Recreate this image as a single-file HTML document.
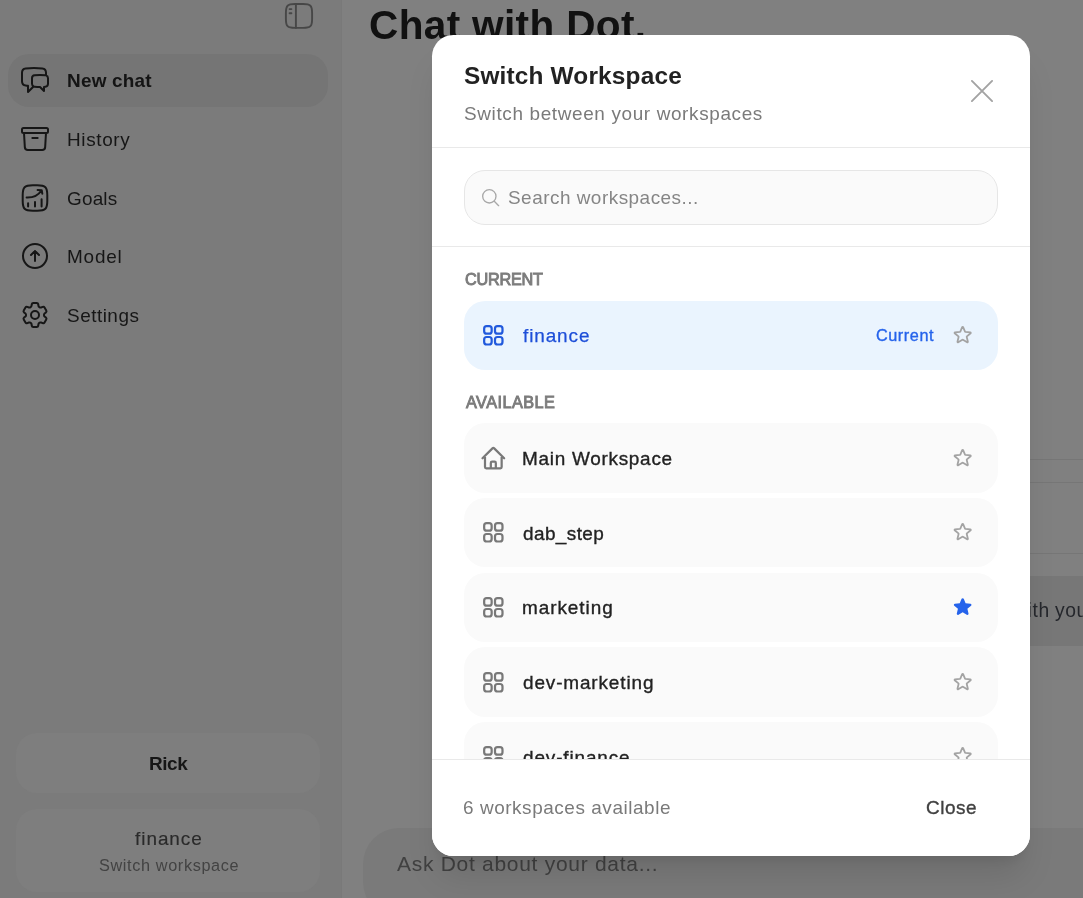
<!DOCTYPE html>
<html lang="en">
<head>
<meta charset="utf-8">
<title>Dot – Switch Workspace</title>
<style>
*{box-sizing:border-box;margin:0;padding:0}
html,body{width:1083px;height:898px;overflow:hidden}
body{position:relative;background:#808080;font-family:"Liberation Sans",sans-serif;color:#171717}
.abs{position:absolute}
.t{position:absolute;white-space:nowrap;line-height:1;font-weight:400;will-change:transform}
svg{position:absolute;display:block;overflow:visible;fill:none;stroke:currentColor;stroke-linecap:round;stroke-linejoin:round}

/* ---------- dimmed app shell (behind overlay) ---------- */
#sidebar{left:0;top:0;width:342px;height:898px;background:#7b7b7b;border-right:1px solid #797979}
.nav-active{left:8px;top:54px;width:320px;height:53px;border-radius:21.33px;background:#757575}
.nav-i{left:19.2px;width:32px;height:32px;color:#161616;stroke-width:1.5}
.side-btn{left:16px;width:304px;border-radius:21px;background:#7e7e7e}
#composer{left:363px;top:828px;width:760px;height:90px;border-radius:36px;background:#7a7a7a}
.hr{left:1030px;width:53px;height:1px;background:#767676}

/* ---------- modal ---------- */
#modal{left:432px;top:35px;width:598px;height:821px;border-radius:21.33px;background:#fff;
 box-shadow:0 26.7px 33.3px -6.7px rgba(0,0,0,.1),0 10.7px 13.3px -8px rgba(0,0,0,.1);overflow:hidden}
.div{left:0;width:598px;height:1px;background:#e9e9e9}
#search{left:32px;top:135px;width:534px;height:55px;border-radius:21px;background:#fafafa;border:1px solid #e6e6e6}
.row{left:32px;width:534px;height:69.33px;border-radius:21.33px;background:#fafafa}
.row.cur{background:#eaf4fe}
.row .ic{left:16px;top:21.33px;width:26.67px;height:26.67px;color:#787878;stroke-width:2}
.row.cur .ic{color:#2159dc}
.row .st{left:488px;top:23.4px;width:21.33px;height:21.33px;color:#a3a3a3;stroke-width:2}
.row .st.on{color:#2563eb;fill:#2563eb;stroke:none}
</style>
</head>
<body>

<!-- ================= SIDEBAR ================= -->
<aside id="sidebar" class="abs">
  <!-- collapse toggle -->
  <svg style="left:284px;top:2px;width:30px;height:28px;color:#474747;stroke-width:1.9" viewBox="284 2 30 28">
    <path d="M294.9 4H303.1C310.5 4 312.1 5.6 312.1 13V18.9C312.1 26.3 310.5 27.9 303.1 27.9H294.9C287.5 27.9 285.9 26.3 285.9 18.9V13C285.9 5.6 287.5 4 294.9 4Z"/>
    <path d="M295.9 4.1V27.9M289.6 9.1H291.4M289.6 13.2H291.4"/>
  </svg>

  <nav>
    <div class="abs nav-active"></div>
    <svg class="nav-i" style="top:64.3px" viewBox="0 0 24 24"><path d="M20.25 8.511c.884.284 1.5 1.128 1.5 2.097v4.286c0 1.136-.847 2.1-1.98 2.193-.34.027-.68.052-1.02.072v3.091l-3-3c-1.354 0-2.694-.055-4.02-.163a2.115 2.115 0 0 1-.825-.242m9.345-8.334a2.126 2.126 0 0 0-.476-.095 48.64 48.64 0 0 0-8.048 0c-1.131.094-1.976 1.057-1.976 2.192v4.286c0 .837.46 1.58 1.155 1.951m9.345-8.334V6.637c0-1.621-1.152-3.026-2.76-3.235A48.455 48.455 0 0 0 11.25 3c-2.115 0-4.198.137-6.24.402-1.608.209-2.76 1.614-2.76 3.235v6.226c0 1.621 1.152 3.026 2.76 3.235.577.075 1.157.14 1.74.194V21l4.155-4.155"/></svg>
    <span id="n1" class="t" style="left:66.84px;top:71.86px;font-size:18.95px;color:#141414;font-weight:700;letter-spacing:0.21px">New chat</span>
    <svg class="nav-i" style="top:123px" viewBox="0 0 24 24"><path d="m20.25 7.5-.625 10.632a2.25 2.25 0 0 1-2.247 2.118H6.622a2.25 2.25 0 0 1-2.247-2.118L3.75 7.5M10 11.25h4M3.375 7.5h17.25c.621 0 1.125-.504 1.125-1.125v-1.5c0-.621-.504-1.125-1.125-1.125H3.375c-.621 0-1.125.504-1.125 1.125v1.5c0 .621.504 1.125 1.125 1.125Z"/></svg>
    <span id="n2" class="t" style="left:66.80px;top:130.96px;font-size:18.95px;color:#161616;letter-spacing:0.629px">History</span>
    <!-- goals: squircle chart -->
    <svg style="left:19px;top:181.7px;width:32px;height:32px;color:#161616;stroke-width:2" viewBox="19 181.7 32 32">
      <path d="M32.7 185H37.3C45.5 185 47.3 186.8 47.3 195V200.4C47.3 208.6 45.5 210.4 37.3 210.4H32.7C24.5 210.4 22.7 208.6 22.7 200.4V195C22.7 186.8 24.5 185 32.7 185Z"/>
      <path d="M28.1 203V206.2M35 201.6V206.2M41.6 199V206.2"/>
      <path d="M26.6 197.2C32.5 197.4 38 195.6 41.4 190.2M37.6 189.7L41.7 189.9L42.3 193.4"/>
    </svg>
    <span id="n3" class="t" style="left:66.90px;top:189.96px;font-size:18.95px;color:#161616;letter-spacing:0.188px">Goals</span>
    <svg class="nav-i" style="top:240.3px" viewBox="0 0 24 24"><path d="m15 11.25-3-3m0 0-3 3m3-3v7.5M21 12a9 9 0 1 1-18 0 9 9 0 0 1 18 0Z"/></svg>
    <span id="n4" class="t" style="left:66.80px;top:247.96px;font-size:18.95px;color:#161616;letter-spacing:0.8px">Model</span>
    <svg class="nav-i" style="top:299px" viewBox="0 0 24 24"><path d="M9.594 3.94c.09-.542.56-.94 1.11-.94h2.593c.55 0 1.02.398 1.11.94l.213 1.281c.063.374.313.686.645.87.074.04.147.083.22.127.325.196.72.257 1.075.124l1.217-.456a1.125 1.125 0 0 1 1.37.49l1.296 2.247a1.125 1.125 0 0 1-.26 1.431l-1.003.827c-.293.241-.438.613-.43.992a7.723 7.723 0 0 1 0 .255c-.008.378.137.75.43.991l1.004.827c.424.35.534.955.26 1.43l-1.298 2.247a1.125 1.125 0 0 1-1.369.491l-1.217-.456c-.355-.133-.75-.072-1.076.124a6.47 6.47 0 0 1-.22.128c-.331.183-.581.495-.644.869l-.213 1.281c-.09.543-.56.94-1.11.94h-2.594c-.55 0-1.019-.398-1.11-.94l-.213-1.281c-.062-.374-.312-.686-.644-.87a6.52 6.52 0 0 1-.22-.127c-.325-.196-.72-.257-1.076-.124l-1.217.456a1.125 1.125 0 0 1-1.369-.49l-1.297-2.247a1.125 1.125 0 0 1 .26-1.431l1.004-.827c.292-.24.437-.613.43-.991a6.932 6.932 0 0 1 0-.255c.007-.38-.138-.751-.43-.992l-1.004-.827a1.125 1.125 0 0 1-.26-1.43l1.297-2.247a1.125 1.125 0 0 1 1.37-.491l1.216.456c.356.133.751.072 1.076-.124.072-.044.146-.086.22-.128.332-.183.582-.495.644-.869l.214-1.28Z"/><path d="M15 12a3 3 0 1 1-6 0 3 3 0 0 1 6 0Z"/></svg>
    <span id="n5" class="t" style="left:66.78px;top:307.06px;font-size:18.95px;color:#161616;letter-spacing:0.496px">Settings</span>
  </nav>

  <div class="abs side-btn" style="top:733px;height:60px"></div>
  <span id="rick" class="t" style="left:148.72px;top:755.16px;font-size:18.95px;color:#161616;font-weight:700;letter-spacing:-0.408px">Rick</span>
  <div class="abs side-btn" style="top:809.3px;height:82.7px"></div>
  <span id="sfin" class="t" style="left:135.17px;top:829.96px;font-size:18.95px;color:#2a2a2a;letter-spacing:0.959px;-webkit-text-stroke:0.15px currentColor">finance</span>
  <span id="ssw" class="t" style="left:98.65px;top:856.54px;font-size:16.25px;color:#434343;letter-spacing:0.632px">Switch workspace</span>
</aside>

<!-- ================= MAIN ================= -->
<main>
  <h1 id="title" class="t" style="left:368.70px;top:4.63px;font-size:40.6px;color:#111111;font-weight:700;letter-spacing:0.33px">Chat with Dot.</h1>
  <div class="abs hr" style="top:458.5px"></div>
  <div class="abs hr" style="top:482.3px"></div>
  <div class="abs hr" style="top:553.3px"></div>
  <div class="abs" style="left:1000px;top:576px;width:83px;height:69.7px;background:#777777"></div>
  <span id="with" class="t" style="left:1013.30px;top:600.66px;font-size:19.3px;color:#25272c;letter-spacing:0.65px;word-spacing:-1.0px">with your</span>
  <div id="composer" class="abs"></div>
  <span id="ask" class="t" style="left:397.10px;top:852.82px;font-size:21px;color:#414141;letter-spacing:0.71px">Ask Dot about your data...</span>
</main>

<!-- ================= MODAL ================= -->
<section id="modal" class="abs">
  <h2 id="mt" class="t" style="left:31.84px;top:29.25px;font-size:24.4px;color:#222222;font-weight:700;letter-spacing:0.175px">Switch Workspace</h2>
  <p id="ms" class="t" style="left:31.92px;top:69.66px;font-size:18.95px;color:#7a7a7a;letter-spacing:0.632px">Switch between your workspaces</p>
  <svg style="left:538px;top:44px;width:24px;height:24px;color:#a3a3a3;stroke-width:1.9" viewBox="0 0 24 24"><path d="M1.9 1.9 22.1 22.1M22.1 1.9 1.9 22.1"/></svg>
  <div class="abs div" style="top:112px"></div>

  <div id="search" class="abs"></div>
  <svg style="left:48.3px;top:152px;width:21.33px;height:21.33px;color:#a8a8a8;stroke-width:1.5" viewBox="0 0 24 24"><path d="m21 21-5.197-5.197m0 0A7.5 7.5 0 1 0 5.196 5.196a7.5 7.5 0 0 0 10.607 10.607Z"/></svg>
  <span id="srch" class="t" style="left:76.05px;top:153.96px;font-size:18.95px;color:#858585;letter-spacing:0.49px">Search workspaces...</span>
  <div class="abs div" style="top:211px"></div>

  <span id="lc" class="t" style="left:33.00px;top:236.24px;font-size:16.25px;color:#7c7c7c;letter-spacing:-0.265px;-webkit-text-stroke:0.9px currentColor">CURRENT</span>
  <div class="abs row cur" style="top:266px">
    <svg class="ic" viewBox="0 0 24 24"><path d="M3.75 6A2.25 2.25 0 0 1 6 3.75h2.25A2.25 2.25 0 0 1 10.5 6v2.25a2.25 2.25 0 0 1-2.25 2.25H6a2.25 2.25 0 0 1-2.25-2.25V6ZM3.75 15.75A2.25 2.25 0 0 1 6 13.5h2.25a2.25 2.25 0 0 1 2.25 2.25V18a2.25 2.25 0 0 1-2.25 2.25H6A2.25 2.25 0 0 1 3.75 18v-2.25ZM13.5 6a2.25 2.25 0 0 1 2.25-2.25H18A2.25 2.25 0 0 1 20.25 6v2.25A2.25 2.25 0 0 1 18 10.5h-2.25a2.25 2.25 0 0 1-2.25-2.25V6ZM13.5 15.75a2.25 2.25 0 0 1 2.25-2.25H18a2.25 2.25 0 0 1 2.25 2.25V18A2.25 2.25 0 0 1 18 20.25h-2.25A2.25 2.25 0 0 1 13.5 18v-2.25Z"/></svg>
    <svg class="st" viewBox="0 0 24 24"><path d="M11.48 3.499a.562.562 0 0 1 1.04 0l2.125 5.111a.563.563 0 0 0 .475.345l5.518.442c.499.04.701.663.321.988l-4.204 3.602a.563.563 0 0 0-.182.557l1.285 5.385a.562.562 0 0 1-.84.61l-4.725-2.885a.562.562 0 0 0-.586 0L6.982 20.54a.562.562 0 0 1-.84-.61l1.285-5.386a.562.562 0 0 0-.182-.557l-4.204-3.602a.562.562 0 0 1 .321-.988l5.518-.442a.563.563 0 0 0 .475-.345L11.48 3.5Z"/></svg>
  </div>
  <span id="rfin" class="t" style="left:91.20px;top:291.76px;font-size:18.95px;color:#1d4ed8;letter-spacing:0.891px;-webkit-text-stroke:0.25px currentColor">finance</span>
  <span id="cur" class="t" style="left:443.61px;top:292.44px;font-size:16.25px;color:#2563eb;letter-spacing:0.55px;-webkit-text-stroke:0.35px currentColor">Current</span>

  <span id="la" class="t" style="left:33.60px;top:359.24px;font-size:16.25px;color:#7c7c7c;letter-spacing:0.448px;-webkit-text-stroke:0.9px currentColor">AVAILABLE</span>
  <div class="abs row" style="top:388.2px">
    <svg class="ic" viewBox="0 0 24 24"><path d="m2.25 12 8.954-8.955c.44-.439 1.152-.439 1.591 0L21.75 12M4.5 9.75v10.125c0 .621.504 1.125 1.125 1.125H9.75v-4.875c0-.621.504-1.125 1.125-1.125h2.25c.621 0 1.125.504 1.125 1.125V21h4.125c.621 0 1.125-.504 1.125-1.125V9.75M8.25 21h8.25"/></svg>
    <svg class="st" viewBox="0 0 24 24"><path d="M11.48 3.499a.562.562 0 0 1 1.04 0l2.125 5.111a.563.563 0 0 0 .475.345l5.518.442c.499.04.701.663.321.988l-4.204 3.602a.563.563 0 0 0-.182.557l1.285 5.385a.562.562 0 0 1-.84.61l-4.725-2.885a.562.562 0 0 0-.586 0L6.982 20.54a.562.562 0 0 1-.84-.61l1.285-5.386a.562.562 0 0 0-.182-.557l-4.204-3.602a.562.562 0 0 1 .321-.988l5.518-.442a.563.563 0 0 0 .475-.345L11.48 3.5Z"/></svg>
  </div>
  <span id="r1" class="t" style="left:90.30px;top:415.16px;font-size:18.95px;color:#222222;letter-spacing:0.725px;-webkit-text-stroke:0.35px currentColor">Main Workspace</span>
  <div class="abs row" style="top:462.87px">
    <svg class="ic" viewBox="0 0 24 24"><path d="M3.75 6A2.25 2.25 0 0 1 6 3.75h2.25A2.25 2.25 0 0 1 10.5 6v2.25a2.25 2.25 0 0 1-2.25 2.25H6a2.25 2.25 0 0 1-2.25-2.25V6ZM3.75 15.75A2.25 2.25 0 0 1 6 13.5h2.25a2.25 2.25 0 0 1 2.25 2.25V18a2.25 2.25 0 0 1-2.25 2.25H6A2.25 2.25 0 0 1 3.75 18v-2.25ZM13.5 6a2.25 2.25 0 0 1 2.25-2.25H18A2.25 2.25 0 0 1 20.25 6v2.25A2.25 2.25 0 0 1 18 10.5h-2.25a2.25 2.25 0 0 1-2.25-2.25V6ZM13.5 15.75a2.25 2.25 0 0 1 2.25-2.25H18a2.25 2.25 0 0 1 2.25 2.25V18A2.25 2.25 0 0 1 18 20.25h-2.25A2.25 2.25 0 0 1 13.5 18v-2.25Z"/></svg>
    <svg class="st" viewBox="0 0 24 24"><path d="M11.48 3.499a.562.562 0 0 1 1.04 0l2.125 5.111a.563.563 0 0 0 .475.345l5.518.442c.499.04.701.663.321.988l-4.204 3.602a.563.563 0 0 0-.182.557l1.285 5.385a.562.562 0 0 1-.84.61l-4.725-2.885a.562.562 0 0 0-.586 0L6.982 20.54a.562.562 0 0 1-.84-.61l1.285-5.386a.562.562 0 0 0-.182-.557l-4.204-3.602a.562.562 0 0 1 .321-.988l5.518-.442a.563.563 0 0 0 .475-.345L11.48 3.5Z"/></svg>
  </div>
  <span id="r2" class="t" style="left:91.31px;top:489.86px;font-size:18.95px;color:#222222;letter-spacing:0.411px;-webkit-text-stroke:0.35px currentColor">dab_step</span>
  <div class="abs row" style="top:537.53px">
    <svg class="ic" viewBox="0 0 24 24"><path d="M3.75 6A2.25 2.25 0 0 1 6 3.75h2.25A2.25 2.25 0 0 1 10.5 6v2.25a2.25 2.25 0 0 1-2.25 2.25H6a2.25 2.25 0 0 1-2.25-2.25V6ZM3.75 15.75A2.25 2.25 0 0 1 6 13.5h2.25a2.25 2.25 0 0 1 2.25 2.25V18a2.25 2.25 0 0 1-2.25 2.25H6A2.25 2.25 0 0 1 3.75 18v-2.25ZM13.5 6a2.25 2.25 0 0 1 2.25-2.25H18A2.25 2.25 0 0 1 20.25 6v2.25A2.25 2.25 0 0 1 18 10.5h-2.25a2.25 2.25 0 0 1-2.25-2.25V6ZM13.5 15.75a2.25 2.25 0 0 1 2.25-2.25H18a2.25 2.25 0 0 1 2.25 2.25V18A2.25 2.25 0 0 1 18 20.25h-2.25A2.25 2.25 0 0 1 13.5 18v-2.25Z"/></svg>
    <svg class="st on" viewBox="0 0 24 24"><path d="M10.788 3.21c.448-1.077 1.976-1.077 2.424 0l2.082 5.006 5.404.434c1.164.093 1.636 1.545.749 2.305l-4.117 3.527 1.257 5.273c.271 1.136-.964 2.033-1.96 1.425L12 18.354 7.373 21.18c-.996.608-2.231-.29-1.96-1.425l1.257-5.273-4.117-3.527c-.887-.76-.415-2.212.749-2.305l5.404-.434 2.082-5.005Z"/></svg>
  </div>
  <span id="r3" class="t" style="left:90.25px;top:564.46px;font-size:18.95px;color:#222222;letter-spacing:0.94px;-webkit-text-stroke:0.35px currentColor">marketing</span>
  <div class="abs row" style="top:612.2px">
    <svg class="ic" viewBox="0 0 24 24"><path d="M3.75 6A2.25 2.25 0 0 1 6 3.75h2.25A2.25 2.25 0 0 1 10.5 6v2.25a2.25 2.25 0 0 1-2.25 2.25H6a2.25 2.25 0 0 1-2.25-2.25V6ZM3.75 15.75A2.25 2.25 0 0 1 6 13.5h2.25a2.25 2.25 0 0 1 2.25 2.25V18a2.25 2.25 0 0 1-2.25 2.25H6A2.25 2.25 0 0 1 3.75 18v-2.25ZM13.5 6a2.25 2.25 0 0 1 2.25-2.25H18A2.25 2.25 0 0 1 20.25 6v2.25A2.25 2.25 0 0 1 18 10.5h-2.25a2.25 2.25 0 0 1-2.25-2.25V6ZM13.5 15.75a2.25 2.25 0 0 1 2.25-2.25H18a2.25 2.25 0 0 1 2.25 2.25V18A2.25 2.25 0 0 1 18 20.25h-2.25A2.25 2.25 0 0 1 13.5 18v-2.25Z"/></svg>
    <svg class="st" viewBox="0 0 24 24"><path d="M11.48 3.499a.562.562 0 0 1 1.04 0l2.125 5.111a.563.563 0 0 0 .475.345l5.518.442c.499.04.701.663.321.988l-4.204 3.602a.563.563 0 0 0-.182.557l1.285 5.385a.562.562 0 0 1-.84.61l-4.725-2.885a.562.562 0 0 0-.586 0L6.982 20.54a.562.562 0 0 1-.84-.61l1.285-5.386a.562.562 0 0 0-.182-.557l-4.204-3.602a.562.562 0 0 1 .321-.988l5.518-.442a.563.563 0 0 0 .475-.345L11.48 3.5Z"/></svg>
  </div>
  <span id="r4" class="t" style="left:91.08px;top:639.16px;font-size:18.95px;color:#222222;letter-spacing:0.869px;-webkit-text-stroke:0.35px currentColor">dev-marketing</span>
  <div class="abs row" style="top:686.87px">
    <svg class="ic" viewBox="0 0 24 24"><path d="M3.75 6A2.25 2.25 0 0 1 6 3.75h2.25A2.25 2.25 0 0 1 10.5 6v2.25a2.25 2.25 0 0 1-2.25 2.25H6a2.25 2.25 0 0 1-2.25-2.25V6ZM3.75 15.75A2.25 2.25 0 0 1 6 13.5h2.25a2.25 2.25 0 0 1 2.25 2.25V18a2.25 2.25 0 0 1-2.25 2.25H6A2.25 2.25 0 0 1 3.75 18v-2.25ZM13.5 6a2.25 2.25 0 0 1 2.25-2.25H18A2.25 2.25 0 0 1 20.25 6v2.25A2.25 2.25 0 0 1 18 10.5h-2.25a2.25 2.25 0 0 1-2.25-2.25V6ZM13.5 15.75a2.25 2.25 0 0 1 2.25-2.25H18a2.25 2.25 0 0 1 2.25 2.25V18A2.25 2.25 0 0 1 18 20.25h-2.25A2.25 2.25 0 0 1 13.5 18v-2.25Z"/></svg>
    <svg class="st" viewBox="0 0 24 24"><path d="M11.48 3.499a.562.562 0 0 1 1.04 0l2.125 5.111a.563.563 0 0 0 .475.345l5.518.442c.499.04.701.663.321.988l-4.204 3.602a.563.563 0 0 0-.182.557l1.285 5.385a.562.562 0 0 1-.84.61l-4.725-2.885a.562.562 0 0 0-.586 0L6.982 20.54a.562.562 0 0 1-.84-.61l1.285-5.386a.562.562 0 0 0-.182-.557l-4.204-3.602a.562.562 0 0 1 .321-.988l5.518-.442a.563.563 0 0 0 .475-.345L11.48 3.5Z"/></svg>
  </div>
  <span id="r5" class="t" style="left:91.28px;top:713.86px;font-size:18.95px;color:#222222;letter-spacing:0.865px;-webkit-text-stroke:0.35px currentColor">dev-finance</span>

  <footer class="abs" style="left:0;top:723.5px;width:598px;height:98px;background:#fff;border-top:1px solid #e9e9e9"></footer>
  <span id="cnt" class="t" style="left:31.49px;top:764.36px;font-size:18.95px;color:#7a7a7a;letter-spacing:0.556px">6 workspaces available</span>
  <span id="close" class="t" style="left:494.22px;top:764.36px;font-size:18.95px;color:#404040;letter-spacing:0.547px;-webkit-text-stroke:0.35px currentColor">Close</span>
</section>

</body>
</html>
